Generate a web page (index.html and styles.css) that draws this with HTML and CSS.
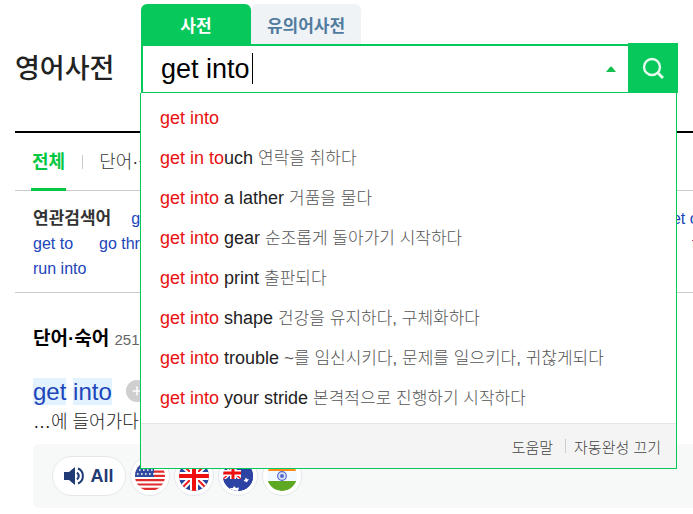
FILE: index.html
```html
<!DOCTYPE html>
<html lang="ko">
<head>
    <meta charset="UTF-8">
    <meta name="viewport" content="width=device-width, initial-scale=1.0">
    <title>영어사전</title>
    <link rel="stylesheet" href="styles.css">
</head>
<body>
    <header class="header">
        <h1 class="logo">영어사전</h1>
        <div class="search">
            <div class="search-tabs">
                <button type="button" class="search-tab active">사전</button>
                <button type="button" class="search-tab">유의어사전</button>
            </div>
            <form class="search-form">
                <div class="search-box">
                    <input type="text" class="search-input" value="get into" aria-label="검색어" autocomplete="off">
                    <span class="caret"></span>
                    <button type="button" class="toggle" aria-label="자동완성">
                        <svg width="10" height="6" viewBox="0 0 10 6"><path d="M0 6L4 1Q5 0 6 1L10 6Z" fill="#13c04f"/></svg>
                    </button>
                </div>
                <button type="submit" class="search-button" aria-label="검색">
                    <svg width="22" height="22" viewBox="0 0 22 22" fill="none" stroke="#e6faee" stroke-width="2.4">
                        <circle cx="10" cy="10" r="8"/>
                        <path d="M15.500 15.500L21 21" stroke-width="3"/>
                    </svg>
                </button>
            </form>

            <div class="suggest">
                <ul class="suggest-list">
                    <li><a href="#"><em>get into</em></a></li>
                    <li><a href="#"><em>get in to</em>uch <span>연락을 취하다</span></a></li>
                    <li><a href="#"><em>get into</em> a lather <span>거품을 물다</span></a></li>
                    <li><a href="#"><em>get into</em> gear <span>순조롭게 돌아가기 시작하다</span></a></li>
                    <li><a href="#"><em>get into</em> print <span>출판되다</span></a></li>
                    <li><a href="#"><em>get into</em> shape <span>건강을 유지하다, 구체화하다</span></a></li>
                    <li><a href="#"><em>get into</em> trouble <span>~를 임신시키다, 문제를 일으키다, 귀찮게되다</span></a></li>
                    <li><a href="#"><em>get into</em> your stride <span>본격적으로 진행하기 시작하다</span></a></li>
                </ul>
                <div class="suggest-footer">
                    <a href="#">도움말</a>
                    <span class="bar"></span>
                    <a href="#">자동완성 끄기</a>
                </div>
            </div>
        </div>
    </header>

    <main class="content">
        <nav class="nav">
            <a href="#" class="active">전체</a>
            <span class="bar"></span>
            <a href="#">단어·숙어</a>
        </nav>

        <section class="related">
            <div class="related-row">
                <h2>연관검색어</h2>
                <a href="#">get</a>
                <a href="#" class="cut">get out</a>
            </div>
            <div class="related-row">
                <a href="#">get to</a>
                <a href="#">go thr</a>
                <a href="#" class="cut visited">to</a>
            </div>
            <div class="related-row">
                <a href="#">run into</a>
            </div>
        </section>

        <section class="words">
            <h2>단어·숙어 <span class="count">251</span></h2>
            <div class="entry">
                <a href="#" class="entry-word"><mark>get</mark> <mark>into</mark></a>
                <button type="button" class="add" aria-label="단어장에 추가">
                    <svg width="22" height="22" viewBox="0 0 22 22">
                        <circle cx="11" cy="11" r="11" fill="#cfcfcf"/>
                        <path d="M11 6.500V15.500M6.500 11H15.500" stroke="#fff" stroke-width="1.500"/>
                    </svg>
                </button>
            </div>
            <p class="meaning">…에 들어가다,</p>
            <div class="audio">
                <button type="button" class="audio-all">
                    <svg width="20" height="18" viewBox="0 0 20 18">
                        <path d="M0 5H5L11 0V18L5 13H0Z" fill="#1f3a75"/>
                        <path d="M13 5.500Q16.500 9 13 12.500M14 1.500C20.500 4 20.500 14 14 16.500" fill="none" stroke="#1f3a75" stroke-width="2"/>
                    </svg>
                    All
                </button>
                <button type="button" class="flag" aria-label="미국">
                    <svg width="30" height="30" viewBox="0 0 30 30">
                        <rect width="30" height="30" fill="#fff"/>
                        <path d="M0 2H30M0 6.300H30M0 10.600H30M0 14.900H30M0 19.200H30M0 23.500H30M0 27.800H30" stroke="#e02b2b" stroke-width="2.200"/>
                        <rect width="19" height="16" fill="#2e4a9e"/>
                        <path d="M2 5H19M4 9H19M2 13H19" stroke="#fff" stroke-width="1.600" stroke-dasharray="1.600 2.400"/>
                    </svg>
                </button>
                <button type="button" class="flag" aria-label="영국">
                    <svg width="30" height="30" viewBox="0 0 30 30">
                        <rect width="30" height="30" fill="#2b479b"/>
                        <path d="M0 0L30 30M30 0L0 30" stroke="#fff" stroke-width="6"/>
                        <path d="M0 0L30 30M30 0L0 30" stroke="#ef1c1c" stroke-width="2"/>
                        <path d="M15 0V30M0 15H30" stroke="#fff" stroke-width="8"/>
                        <path d="M15 0V30M0 15H30" stroke="#f00f0f" stroke-width="4"/>
                    </svg>
                </button>
                <button type="button" class="flag" aria-label="호주">
                    <svg width="30" height="30" viewBox="0 0 30 30">
                        <rect width="30" height="30" fill="#2d43a3"/>
                        <path d="M0 2L18 18M18 2L0 18" stroke="#fff" stroke-width="4"/>
                        <path d="M0 2L18 18M18 2L0 18" stroke="#ef1c1c" stroke-width="1.500"/>
                        <path d="M10 0V18M0 12H18" stroke="#fff" stroke-width="6"/>
                        <path d="M10 0V18M0 12H18" stroke="#f00f0f" stroke-width="3"/>
                        <rect y="18" width="30" height="12" fill="#2d43a3"/>
                        <rect x="18" width="12" height="30" fill="#2d43a3"/>
                        <path d="M23 16.500L24 18L26 18.500L24.500 20L24 21.500L22.500 20.500L20.500 20L22 18.500Z" fill="#fff"/>
                        <path d="M11 25L13 27L16 26.500L15 30H8L7 27L10 27Z" fill="#fff"/>
                    </svg>
                </button>
                <button type="button" class="flag" aria-label="인도">
                    <svg width="30" height="30" viewBox="0 0 30 30">
                        <rect width="30" height="30" fill="#f3faff"/>
                        <rect width="30" height="10" fill="#ff8c1a"/>
                        <rect y="20" width="30" height="10" fill="#5fa824"/>
                        <circle cx="15" cy="15" r="4.300" fill="#dfe6fb" stroke="#5468c8" stroke-width="1.200"/>
                        <circle cx="15" cy="15" r="2" fill="#5468c8"/>
                    </svg>
                </button>
            </div>
        </section>
    </main>
</body>
</html>
```
FILE: styles.css
```css
* {
    box-sizing: border-box;
}
body {
    margin: 0;
    background-color: #fff;
    color: #222;
    font-family: "Liberation Sans", "Noto Sans CJK KR", sans-serif;
    font-size: 16px;
    overflow-x: hidden;
}
h1, h2, p, ul {
    margin: 0;
    padding: 0;
}
a {
    color: inherit;
    text-decoration: none;
}
button {
    padding: 0;
    border: none;
    background: none;
    font-family: inherit;
    cursor: pointer;
}
svg {
    display: block;
}
.bar {
    width: 1px;
    height: 14px;
    background-color: #ccc;
}

/* header */
.header {
    display: flex;
    padding: 4px 15px 0;
    height: 131px;
}
.logo {
    width: 126px;
    padding-top: 45px;
    font-size: 27px;
    font-weight: 500;
    line-height: 40px;
    white-space: nowrap;
}
.search {
    position: relative;
    flex: 1;
    height: 89px;
}
.search-tabs {
    display: flex;
}
.search-tab {
    width: 110px;
    height: 40px;
    border-radius: 6px 6px 0 0;
    background-color: #eff3f6;
    color: #527c9f;
    font-size: 17px;
    font-weight: bold;
}
.search-tab.active {
    background-color: #06c85b;
    color: #fff;
}
.search-form {
    display: flex;
    align-items: flex-end;
    height: 49px;
}
.search-box {
    position: relative;
    display: flex;
    flex: 1;
    height: 49px;
    border: 2px solid #06c85b;
    border-right: none;
    border-bottom-width: 1px;
}
.search-input {
    flex: 1;
    min-width: 0;
    padding: 0 18px;
    border: none;
    outline: none;
    background: none;
    color: #000;
    font-family: inherit;
    font-size: 27px;
}
.caret {
    position: absolute;
    top: 7px;
    left: 109px;
    width: 1px;
    height: 31px;
    background-color: #000;
}
.toggle {
    display: flex;
    align-items: center;
    justify-content: center;
    width: 34px;
}
.search-button {
    display: flex;
    align-items: center;
    justify-content: center;
    width: 50px;
    height: 50px;
    background-color: #06c85b;
}

/* autocomplete */
.suggest {
    position: absolute;
    top: 100%;
    left: -1px;
    right: 1px;
    z-index: 10;
    border: 1px solid #06c85b;
    border-top: none;
    background-color: #fff;
}
.suggest-list {
    padding: 5px 0;
    list-style: none;
}
.suggest-list a {
    display: block;
    height: 40px;
    padding: 0 19px;
    font-size: 18px;
    line-height: 40px;
    white-space: nowrap;
}
.suggest-list em {
    color: #e81010;
    font-style: normal;
}
.suggest-list span {
    color: #555;
    font-size: 17px;
    font-weight: 300;
}
.suggest-footer {
    display: flex;
    align-items: center;
    justify-content: flex-end;
    height: 45px;
    padding: 0 15px;
    border-top: 1px solid #e5e5e5;
    background-color: #f4f4f4;
    color: #444;
    font-size: 15px;
    font-weight: 300;
}
.suggest-footer .bar {
    margin: 0 8px 0 12px;
}

/* page */
.content {
    margin-left: 15px;
    border-top: 2px solid #000;
}
.nav {
    display: flex;
    align-items: center;
    gap: 16px;
    height: 58px;
    padding-left: 16px;
    border-bottom: 1px solid #ccc;
    color: #333;
    font-size: 18px;
    font-weight: 300;
    line-height: 58px;
}
.nav .active {
    height: 58px;
    padding: 0 1px;
    border-bottom: 3px solid #06c744;
    color: #06c744;
    font-weight: bold;
}
.related {
    padding: 15px 0 11px 18px;
    border-bottom: 1px solid #ccc;
    color: #2045bb;
    line-height: 25px;
}
.related-row {
    display: flex;
    gap: 26px;
    height: 25px;
    white-space: nowrap;
}
.related h2 {
    margin-right: -6px;
    color: #333;
    font-size: 17px;
    line-height: 25px;
}
.related .cut {
    width: 30px;
    margin-left: auto;
    overflow: hidden;
}
.related .visited {
    width: 1px;
    color: #800080;
}
.words {
    padding: 30px 0 6px 18px;
}
.words h2 {
    color: #000;
    font-size: 19px;
    line-height: 32px;
}
.count {
    color: #666;
    font-size: 15px;
    font-weight: normal;
}
.entry {
    display: flex;
    align-items: center;
    gap: 14px;
    height: 30px;
    margin-top: 20px;
}
.entry-word {
    color: #2045bb;
    font-size: 24px;
    line-height: 27px;
}
.entry-word mark {
    background-color: #e2f2fe;
    color: inherit;
}
.meaning {
    color: #222;
    font-size: 18px;
    font-weight: 300;
    line-height: 32px;
}
.audio {
    display: flex;
    align-items: center;
    gap: 4px;
    height: 64px;
    margin-top: 6px;
    padding-left: 19px;
    border-radius: 6px 0 0 6px;
    background-color: #f7f9f9;
}
.audio-all, .flag {
    display: flex;
    align-items: center;
    justify-content: center;
    height: 40px;
    border: 1px solid #e5e8eb;
    border-radius: 20px;
    background-color: #fff;
}
.audio-all {
    gap: 6px;
    width: 74px;
    color: #1f3a75;
    font-size: 18px;
    font-weight: bold;
}
.flag {
    width: 40px;
}
.flag svg {
    border-radius: 50%;
}
```
